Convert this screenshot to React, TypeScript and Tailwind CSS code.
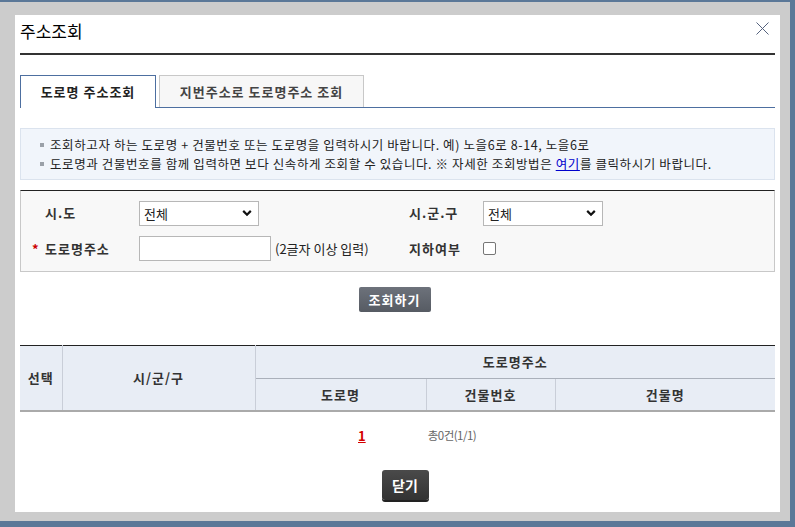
import React from 'react'

const font = { fontFamily: '"Noto Sans CJK KR", "Noto Sans", sans-serif' }

function Chevron() {
  return (
    <svg
      className="pointer-events-none absolute right-[7px] top-1/2 -translate-y-1/2"
      width="10"
      height="7"
      viewBox="0 0 10 7"
      fill="none"
    >
      <path d="M1.2 1.4 5 5.2 8.8 1.4" stroke="#111" strokeWidth="2.2" />
    </svg>
  )
}

function SelectBox() {
  return (
    <div className="relative h-[25px] w-[120px]">
      <select
        className="h-full w-full appearance-none border border-[#b7b7b7] bg-white pl-[4px] text-[13px] text-[#222] outline-none"
        defaultValue="all"
        style={font}
      >
        <option value="all">전체</option>
      </select>
      <Chevron />
    </div>
  )
}

function Label({ text, required }: { text: string; required?: boolean }) {
  return (
    <div className="flex items-center pl-[11px] text-[13px] font-bold tracking-[1px] text-[#333]">
      <span className="w-[13px] text-[13px] text-[#c00]">{required ? '*' : ''}</span>
      {text}
    </div>
  )
}

export default function App() {
  return (
    <div className="h-[527px] w-[795px] bg-[#5b7898] pb-[6px] pr-[5px] pt-[2px]" style={font}>
      <div className="h-full bg-[#cccccc] pb-[9px] pl-[15px] pr-[10px] pt-[13px]">
        <div className="h-full bg-white px-[5px]">
          <div className="relative flex h-[38px] items-start pt-[6px]">
            <h1 className="text-[17px] leading-[20px] text-black">주소조회</h1>
            <svg className="absolute right-[6px] top-[7px]" width="13" height="13" viewBox="0 0 13 13">
              <path d="M0.5 0.5 12.5 12.5M12.5 0.5 0.5 12.5" stroke="#55627e" strokeWidth="1" />
            </svg>
          </div>
          <div className="h-[2px] bg-[#333]" />

          <div className="mt-[20px] flex h-[33px] items-end gap-[3px] border-b border-[#4d6fa0]">
            <div className="-mb-px flex h-[33px] w-[136px] items-center justify-center border border-b-0 border-[#4d6fa0] bg-white text-[13px] font-bold tracking-[1px] text-[#222]">
              도로명 주소조회
            </div>
            <div className="flex h-[32px] w-[205px] items-center justify-center border border-b-0 border-[#c8c8c8] bg-[#f7f7f7] text-[13px] font-bold tracking-[1px] text-[#444]">
              지번주소로 도로명주소 조회
            </div>
          </div>

          <div className="mt-[20px] h-[52px] border border-[#dbe3ee] bg-[#f1f5fb] pl-[19px] pt-[6px] text-[12.5px] leading-[19px] tracking-[0.6px] text-[#222]">
            <div className="flex items-center">
              <span className="mr-[6px] inline-block h-[4px] w-[4px] bg-[#9aa0a8]" />
              조회하고자 하는 도로명 + 건물번호 또는 도로명을 입력하시기 바랍니다. 예) 노을6로 8-14, 노을6로
            </div>
            <div className="flex items-center">
              <span className="mr-[6px] inline-block h-[4px] w-[4px] bg-[#9aa0a8]" />
              <span>
                도로명과 건물번호를 함께 입력하면 보다 신속하게 조회할 수 있습니다. ※ 자세한 조회방법은{' '}
                <a className="text-[#0000cc] underline" href="#">여기</a>를 클릭하시기 바랍니다.
              </span>
            </div>
          </div>

          <div className="mt-[10px] grid h-[82px] grid-cols-[118px_270px_74px_1fr] grid-rows-[25px_25px] content-start gap-y-[11px] border border-t-[#222] border-[#c8c8c8] bg-[#f8f8f8] pt-[9px]">
            <Label text="시.도" />
            <div className="flex items-center">
              <SelectBox />
            </div>
            <div className="flex items-center text-[13px] font-bold tracking-[1px] text-[#333]">시.군.구</div>
            <div className="flex items-center">
              <SelectBox />
            </div>

            <Label text="도로명주소" required />
            <div className="flex items-center">
              <input className="h-[25px] w-[132px] border border-[#b7b7b7] bg-white outline-none" />
              <span className="ml-[4px] text-[13px] text-[#222]">(2글자 이상 입력)</span>
            </div>
            <div className="flex items-center text-[13px] font-bold tracking-[1px] text-[#333]">지하여부</div>
            <div className="flex items-center">
              <span className="h-[13px] w-[13px] rounded-[2px] border border-[#767676] bg-white" />
            </div>
          </div>

          <div className="mt-[15px] flex justify-center pr-[6px]">
            <button className="h-[25px] w-[72px] rounded-[2px] bg-gradient-to-b from-[#6d727b] to-[#565b63] text-[13px] font-bold tracking-[1px] text-white">
              조회하기
            </button>
          </div>

          <table className="mt-[33px] w-full border-collapse border-t border-t-[#222] text-[13px] font-bold tracking-[1px] text-[#333]">
            <thead className="bg-[#e8edf5]">
              <tr className="h-[33px]">
                <th rowSpan={2} className="w-[42px] border-b-2 border-r border-b-[#aaa] border-r-[#c9ced8] font-bold">선택</th>
                <th rowSpan={2} className="w-[193px] border-b-2 border-r border-b-[#aaa] border-r-[#c9ced8] font-bold">시/군/구</th>
                <th colSpan={3} className="border-b border-[#aab0ba] font-bold">도로명주소</th>
              </tr>
              <tr className="h-[32px]">
                <th className="w-[171px] border-b-2 border-r border-b-[#aaa] border-r-[#c9ced8] font-bold">도로명</th>
                <th className="w-[129px] border-b-2 border-r border-b-[#aaa] border-r-[#c9ced8] font-bold">건물번호</th>
                <th className="border-b-2 border-b-[#aaa] font-bold">건물명</th>
              </tr>
            </thead>
          </table>

          <div className="mt-[14px] flex items-center gap-[62px] pl-[338px]">
            <a href="#" className="text-[13px] font-bold text-[#d40000] underline">1</a>
            <span className="text-[11.5px] tracking-[-0.5px] text-[#666]">총0건(1/1)</span>
          </div>

          <div className="mt-[25px] flex justify-center pl-[15px]">
            <button className="h-[30px] w-[47px] rounded-[3px] bg-gradient-to-b from-[#4a4a4a] to-[#333] text-[14px] font-bold text-white shadow-[0_2px_0_#222]">
              닫기
            </button>
          </div>
        </div>
      </div>
    </div>
  )
}
